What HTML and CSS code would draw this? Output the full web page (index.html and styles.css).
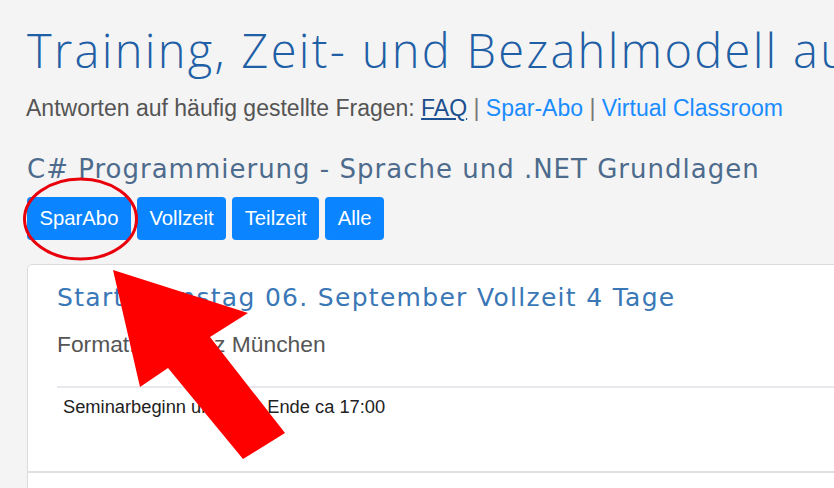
FILE: index.html
```html
<!DOCTYPE html>
<html lang="de">
<head>
<meta charset="utf-8">
<title>Training, Zeit- und Bezahlmodell</title>
<link rel="stylesheet" href="styles.css">
</head>
<body>
<main class="page">
  <h1 class="title">Training, Zeit- und Bezahlmodell au</h1>
  <p class="faq">Antworten auf häufig gestellte Fragen: <a class="faq-link visited" href="#">FAQ</a> <span class="sep">|</span> <a class="faq-link" href="#">Spar-Abo</a> <span class="sep">|</span> <a class="faq-link" href="#">Virtual Classroom</a></p>
  <h2 class="course">C# Programmierung - Sprache und .NET Grundlagen</h2>
  <div class="filters">
    <button class="btn">SparAbo</button>
    <button class="btn">Vollzeit</button>
    <button class="btn">Teilzeit</button>
    <button class="btn">Alle</button>
  </div>
  <section class="card">
    <div class="card-item">
      <h3 class="start">Start Dienstag 06. September Vollzeit 4 Tage</h3>
      <p class="format">Format: Präsenz München</p>
      <div class="times">Seminarbeginn um 9:00, Ende ca 17:00</div>
    </div>
    <div class="card-item next"></div>
  </section>
</main>
<svg class="annotation" width="834" height="488" viewBox="0 0 834 488" aria-hidden="true">
  <ellipse cx="80.5" cy="219" rx="56" ry="40" fill="none" stroke="#e8000b" stroke-width="3"/>
  <polygon points="113,270 248,313 210,337 285,433 243,459 168,368 140,387" fill="#ff0000"/>
</svg>
</body>
</html>
```
FILE: styles.css
```css
html, body {
  margin: 0;
  padding: 0;
  background: #f4f4f4;
  overflow: hidden;
  width: 834px;
  height: 488px;
}
body {
  position: relative;
  font-family: "Liberation Sans", Arial, sans-serif;
}
.page {
  padding: 0 0 0 27px;
  width: 1000px;
}
.title {
  margin: 0;
  padding-top: 22px;
  font-family: "Open Sans", "Noto Sans", sans-serif;
  font-weight: 300;
  font-size: 47px;
  line-height: 56px;
  color: #1f5fa6;
  white-space: nowrap;
  letter-spacing: 2.3px;
}
.faq {
  margin: 16px 0 0 -1px;
  font-size: 23px;
  line-height: 28px;
  color: #555;
  white-space: nowrap;
}
.faq-link {
  color: #1a8cff;
  text-decoration: none;
}
.faq-link.visited {
  color: #1c4f8f;
  text-decoration: underline;
}
.sep {
  color: #777;
}
.course {
  margin: 30px 0 0 0;
  font-family: "DejaVu Sans", sans-serif;
  font-weight: normal;
  font-size: 26px;
  line-height: 34px;
  color: #4d6b8c;
  white-space: nowrap;
  letter-spacing: 1px;
}
.filters {
  display: flex;
  gap: 6px;
  margin-top: 11px;
}
.btn {
  font-family: "Liberation Sans", Arial, sans-serif;
  font-size: 20.3px;
  height: 43px;
  padding: 0 12.5px;
  border: 0;
  border-radius: 4px;
  background: #0a84ff;
  color: #fff;
}
.card {
  margin-top: 24px;
  width: 900px;
  background: #fff;
  border: 1px solid #dcdcdc;
  border-radius: 5px;
}
.card-item {
  padding: 0 29px;
  height: 206px;
  border-bottom: 2px solid #e0e0e0;
}
.card-item.next {
  height: 40px;
  border-bottom: 0;
}
.start {
  margin: 0;
  padding-top: 16px;
  font-family: "DejaVu Sans", sans-serif;
  font-weight: normal;
  font-size: 25px;
  line-height: 34px;
  color: #3a77b6;
  white-space: nowrap;
  letter-spacing: 1.3px;
}
.format {
  margin: 15px 0 0 0;
  font-size: 22.8px;
  line-height: 28px;
  color: #555;
}
.times {
  margin-top: 28px;
  border-top: 2px solid #e8e8ec;
  padding: 8px 0 0 6px;
  font-size: 18.3px;
  line-height: 22px;
  color: #222;
}
.annotation {
  position: absolute;
  left: 0;
  top: 0;
  pointer-events: none;
}
```
